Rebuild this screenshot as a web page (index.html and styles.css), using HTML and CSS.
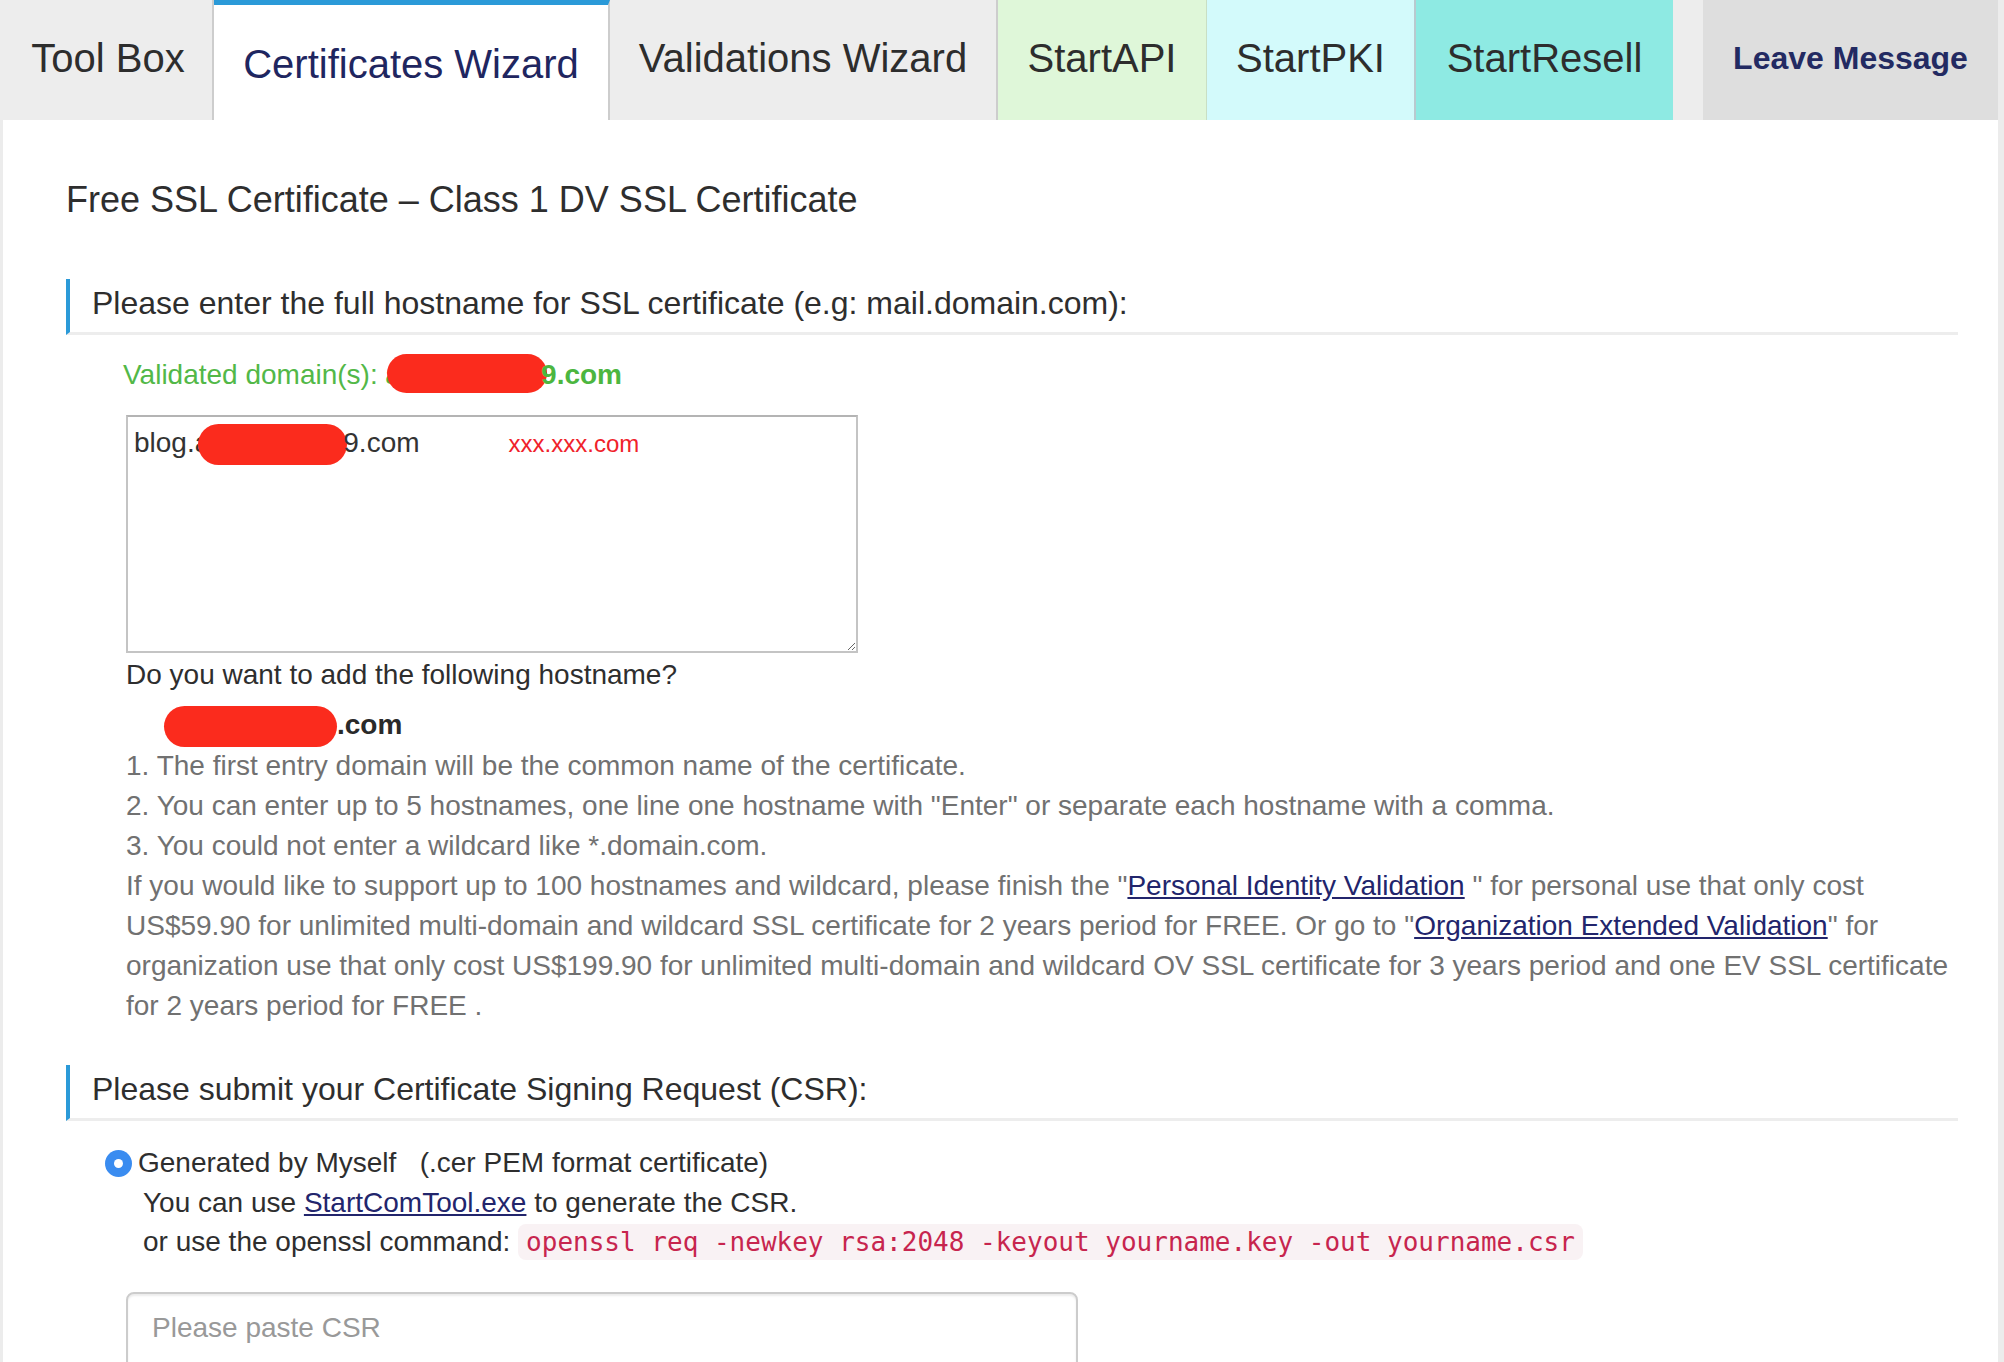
FILE: index.html
```html
<!DOCTYPE html>
<html lang="en">
<head>
<meta charset="utf-8">
<title>Certificates Wizard</title>
<link rel="stylesheet" href="styles.css">
</head>
<body>
<div class="page">
  <nav class="tabs">
    <div class="tab tab-toolbox">Tool Box</div>
    <div class="tab tab-active">Certificates Wizard</div>
    <div class="tab tab-valid">Validations Wizard</div>
    <div class="tab tab-api">StartAPI</div>
    <div class="tab tab-pki">StartPKI</div>
    <div class="tab tab-resell">StartResell</div>
    <div class="tab-gap"></div>
    <div class="tab tab-leave">Leave Message</div>
  </nav>

  <main class="panel">
    <h2 class="title">Free SSL Certificate – Class 1 DV SSL Certificate</h2>

    <h3 class="section">Please enter the full hostname for SSL certificate (e.g: mail.domain.com):</h3>

    <div class="validated">Validated domain(s): <b>a<span class="blob blob-valid"></span>9.com</b></div>

    <div class="hosts">blog.a<span class="blob blob-host"></span>9.com<span class="hint">xxx.xxx.com</span></div>

    <div class="body-text">
      <div>Do you want to add the following hostname?</div>
      <div class="suggest"><span class="blob blob-suggest"></span><b>.com</b></div>
      <div class="muted">1. The first entry domain will be the common name of the certificate.</div>
      <div class="muted">2. You can enter up to 5 hostnames, one line one hostname with "Enter" or separate each hostname with a comma.</div>
      <div class="muted">3. You could not enter a wildcard like *.domain.com.</div>
      <p class="muted para">If you would like to support up to 100 hostnames and wildcard, please finish the "<a href="#">Personal Identity Validation</a> " for personal use that only cost<br>US$59.90 for unlimited multi-domain and wildcard SSL certificate for 2 years period for FREE. Or go to "<a href="#">Organization Extended Validation</a>" for<br>organization use that only cost US$199.90 for unlimited multi-domain and wildcard OV SSL certificate for 3 years period and one EV SSL certificate<br>for 2 years period for FREE .</p>
    </div>

    <h3 class="section section-csr">Please submit your Certificate Signing Request (CSR):</h3>

    <div class="radio-row"><span class="radio"></span>Generated by Myself &nbsp;&nbsp;(.cer PEM format certificate)</div>
    <div class="csr-help">
      <div>You can use <a href="#">StartComTool.exe</a> to generate the CSR.</div>
      <div>or use the openssl command: <code>openssl req -newkey rsa:2048 -keyout yourname.key -out yourname.csr</code></div>
    </div>

    <div class="csr-input">Please paste CSR</div>
  </main>
</div>
</body>
</html>
```

FILE: styles.css
```css
html, body {
  margin: 0;
  padding: 0;
}

body {
  background: #ececec;
  font-family: "Liberation Sans", Arial, Helvetica, sans-serif;
  color: #333;
  overflow: hidden;
}

.page {
  width: 2004px;
  height: 1362px;
  overflow: hidden;
}

/* ---------- tabs ---------- */
.tabs {
  display: flex;
  height: 120px;
}

.tab {
  box-sizing: border-box;
  height: 120px;
  display: flex;
  align-items: center;
  justify-content: center;
  padding-bottom: 4px;
  font-size: 40px;
  color: #2d2d2d;
  white-space: nowrap;
  border-right: 2px solid #cdcdcd;
}

.tab-toolbox {
  width: 214px;
  background: #ededed;
  padding-left: 4px;
}

.tab-active {
  width: 396px;
  background: #fff;
  border-top: 5px solid #2b9ad8;
  padding-top: 3px;
  padding-bottom: 0;
  color: #1f2660;
  font-size: 40px;
}

.tab-valid {
  width: 388px;
  background: #ededed;
}

.tab-api {
  width: 209px;
  background: #dff7d9;
  border-right: 1px solid #c9dfc4;
}

.tab-pki {
  width: 209px;
  background: #d3fafb;
  border-right: 2px solid #b9c9cf;
}

.tab-resell {
  width: 257px;
  background: #8eeae3;
  border-right: none;
}

.tab-gap {
  width: 30px;
  height: 120px;
  background: #ededed;
}

.tab-leave {
  width: 295px;
  background: #dedede;
  border-right: none;
  font-size: 32px;
  font-weight: bold;
  color: #232a62;
}

/* ---------- panel ---------- */
.panel {
  background: #fff;
  margin: 0 6px 0 3px;
  padding: 0 40px 0 63px;
  height: 1242px;
  box-sizing: border-box;
  overflow: hidden;
}

.title {
  margin: 60px 0 0;
  font-size: 36px;
  line-height: 40px;
  font-weight: normal;
  color: #2e2e2e;
}

.section {
  margin: 59px 0 0;
  padding: 4px 0 9px 22px;
  font-size: 32px;
  line-height: 40px;
  font-weight: normal;
  color: #2e2e2e;
  border-left: 4px solid #2b9ad8;
  border-bottom: 3px solid #ededed;
}

.section-csr {
  margin-top: 39px;
}

.validated {
  margin: 20px 0 0 57px;
  font-size: 28px;
  line-height: 40px;
  color: #52b848;
  white-space: nowrap;
}

.validated b {
  color: #4cb63f;
}

.blob {
  display: inline-block;
  background: #fb2b1d;
  border-radius: 22px;
  vertical-align: middle;
}

.blob-valid {
  width: 160px;
  height: 39px;
  margin: -6px -6px 0 -14px;
}

.hosts {
  position: relative;
  box-sizing: border-box;
  width: 732px;
  height: 238px;
  margin: 20px 0 0 60px;
  padding: 6px 6px;
  border: 2px solid #c4c4c4;
  border-top-color: #b4b4b4;
  font-size: 28px;
  line-height: 40px;
  color: #333;
  white-space: nowrap;
  resize: both;
  overflow: hidden;
}

.blob-host {
  width: 149px;
  height: 41px;
  margin: 0 -4px 0 -12px;
}

.hint {
  margin-left: 89px;
  font-size: 24px;
  color: #f0222a;
}

.body-text {
  margin: 2px 0 0 60px;
  font-size: 28px;
  line-height: 40px;
  color: #2e2e2e;
}

.suggest {
  padding: 10px 0 0 38px;
  margin-bottom: -1px;
  white-space: nowrap;
}

.suggest b {
  color: #2a2a2a;
}

.blob-suggest {
  width: 173px;
  height: 41px;
  margin-right: 0;
}

.muted {
  color: #717171;
}

.para {
  margin: 0;
  white-space: nowrap;
}

a {
  color: #22256c;
  text-decoration: underline;
}

.radio-row {
  display: flex;
  align-items: center;
  margin: 22px 0 0 39px;
  font-size: 28px;
  line-height: 40px;
  color: #2e2e2e;
}

.radio {
  position: relative;
  width: 27px;
  height: 27px;
  border-radius: 50%;
  background: #3a8cf0;
  margin-right: 6px;
  flex: none;
}

.radio::after {
  content: "";
  position: absolute;
  left: 9px;
  top: 9px;
  width: 9px;
  height: 9px;
  border-radius: 50%;
  background: #fff;
}

.csr-help {
  margin-left: 77px;
  font-size: 28px;
  line-height: 39px;
  color: #2e2e2e;
}

code {
  font-family: "DejaVu Sans Mono", "Liberation Mono", monospace;
  font-size: 26px;
  color: #c7254e;
  background: #f9f2f4;
  border-radius: 8px;
  padding: 3px 8px;
}

.csr-input {
  box-sizing: border-box;
  width: 952px;
  height: 140px;
  margin: 30px 0 0 60px;
  padding: 14px 24px;
  border: 2px solid #cccccc;
  border-radius: 8px;
  box-shadow: inset 0 2px 2px rgba(0, 0, 0, 0.08);
  font-size: 28px;
  line-height: 40px;
  color: #999;
}
```
